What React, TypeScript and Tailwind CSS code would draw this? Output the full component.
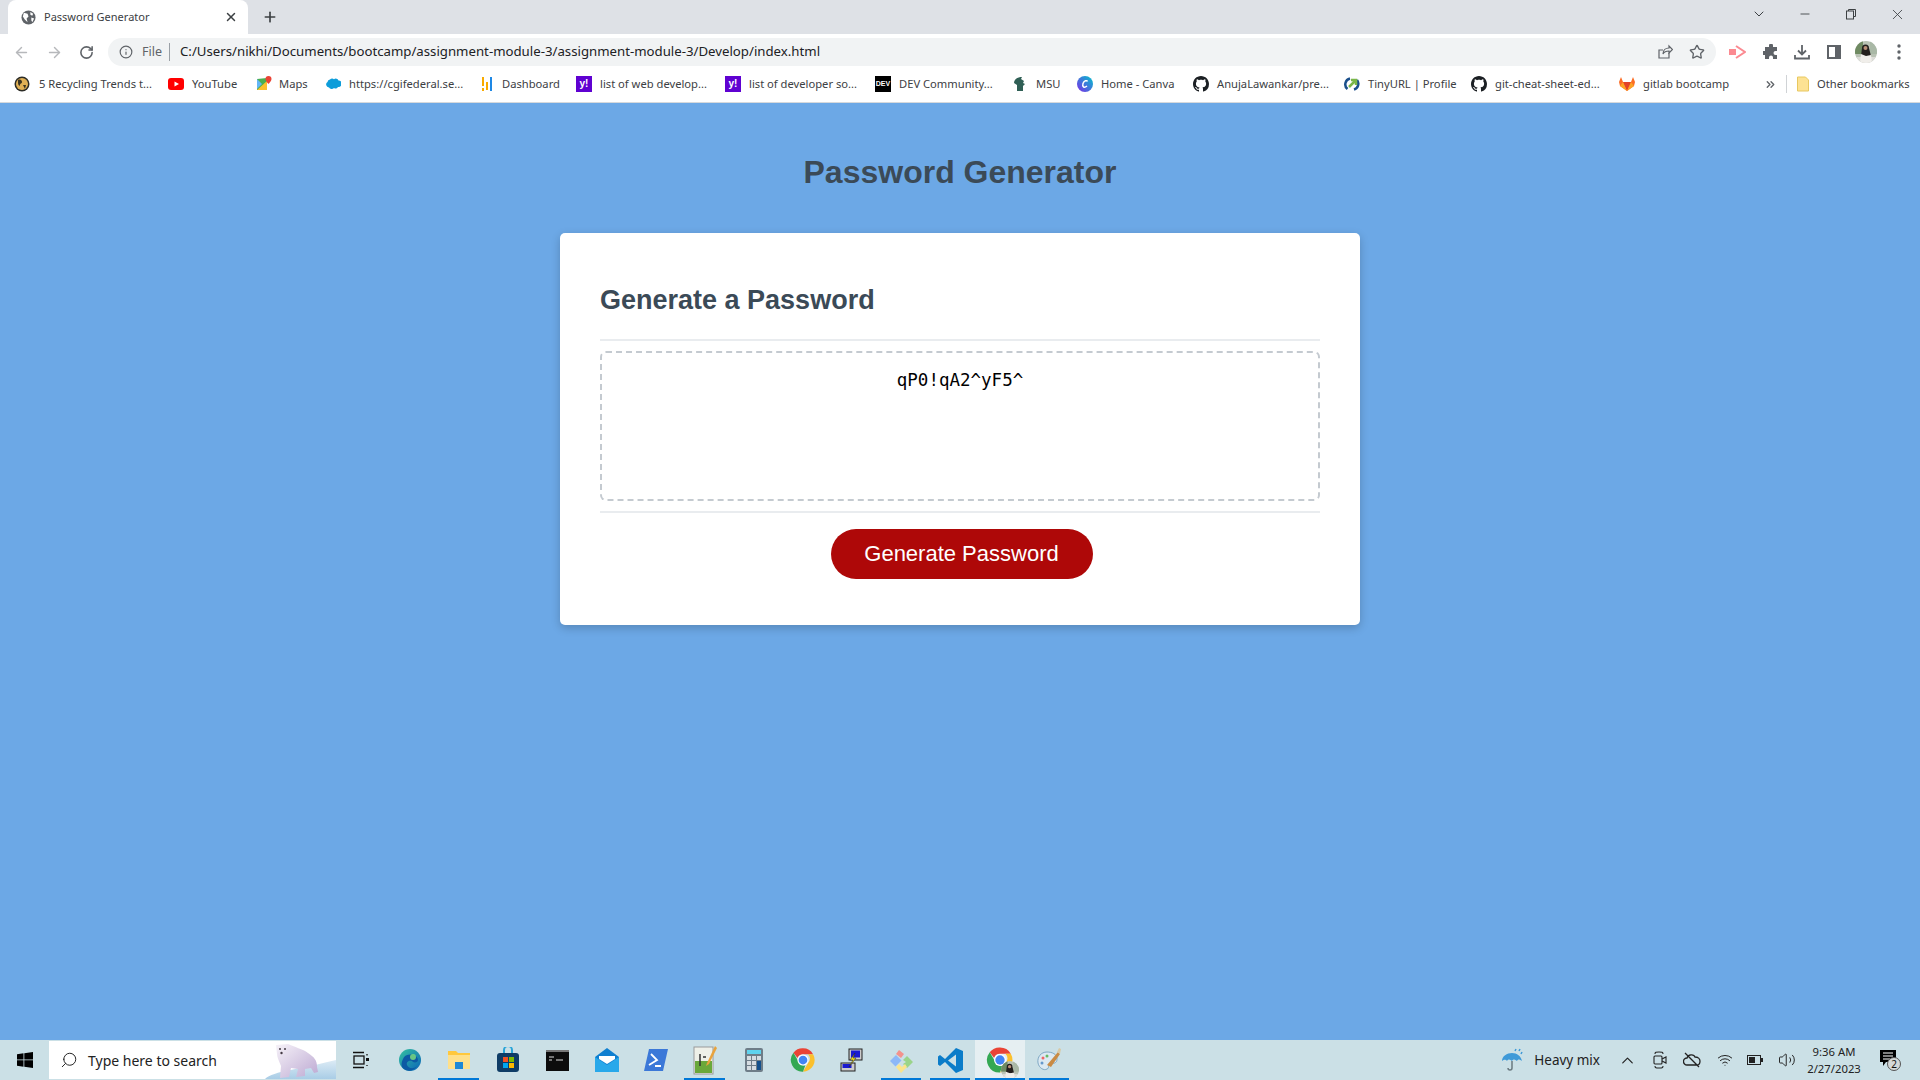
import React from "react";
import { ArrowLeft, ArrowRight, RotateCw, Info, Star, X, Plus, ChevronDown, Minus, ChevronUp, Search, ChevronsRight, Volume2, Wifi } from "lucide-react";

const Sans = "font-['Noto_Sans','Open_Sans',sans-serif]";

function Chrome({ size = 24 }: { size?: number }) {
  return (
    <svg width={size} height={size} viewBox="0 0 48 48">
      <path d="M24 4a20 20 0 0 1 17.3 10H24a10 10 0 0 0-9.4 6.6L7.6 11.5A20 20 0 0 1 24 4z" fill="#ea4335" />
      <path d="M41.3 14A20 20 0 0 1 24 44l8.7-15a10 10 0 0 0-.2-15z" fill="#fbc02d" />
      <path d="M24 44A20 20 0 0 1 7.6 11.5l8.6 15A10 10 0 0 0 28 33.2z" fill="#34a853" />
      <circle cx="24" cy="24" r="9.5" fill="#fff" />
      <circle cx="24" cy="24" r="7.5" fill="#4285f4" />
    </svg>
  );
}

function Github() {
  return (
    <svg width="16" height="16" viewBox="0 0 16 16" fill="#1b1f23">
      <path d="M8 0C3.58 0 0 3.58 0 8c0 3.54 2.29 6.53 5.47 7.59.4.07.55-.17.55-.38 0-.19-.01-.82-.01-1.49-2.01.37-2.53-.49-2.69-.94-.09-.23-.48-.94-.82-1.13-.28-.15-.68-.52-.01-.53.63-.01 1.08.58 1.23.82.72 1.21 1.87.87 2.33.66.07-.52.28-.87.51-1.07-1.78-.2-3.64-.89-3.64-3.95 0-.87.31-1.59.82-2.15-.08-.2-.36-1.02.08-2.12 0 0 .67-.21 2.2.82.64-.18 1.32-.27 2-.27s1.36.09 2 .27c1.53-1.04 2.2-.82 2.2-.82.44 1.1.16 1.92.08 2.12.51.56.82 1.27.82 2.15 0 3.07-1.87 3.75-3.65 3.95.29.25.54.73.54 1.48 0 1.07-.01 1.93-.01 2.2 0 .21.15.46.55.38A8 8 0 0 0 16 8c0-4.42-3.58-8-8-8z" />
    </svg>
  );
}

function Yahoo() {
  return (
    <div className="w-4 h-4 bg-[#5f01d1] flex items-center justify-center text-white text-[10px] font-bold leading-none font-['Liberation_Sans',sans-serif]">y!</div>
  );
}

function Avatar({ size = 22 }: { size?: number }) {
  return (
    <svg width={size} height={size} viewBox="0 0 22 22">
      <clipPath id={`av${size}`}><circle cx="11" cy="11" r="11" /></clipPath>
      <g clipPath={`url(#av${size})`}>
        <rect width="22" height="22" fill="#b9c2b4" />
        <rect width="8" height="13" fill="#6f8a62" />
        <rect x="15" width="7" height="13" fill="#a9b8a6" />
        <rect y="16" width="22" height="6" fill="#dcdcd8" />
        <path d="M7 7a3.500 3.500 0 0 1 7 0l2 8H6z" fill="#231f1d" />
        <circle cx="10.500" cy="7" r="2" fill="#b88e76" />
        <path d="M5 22l1-9 5 2 5-1 1 8z" fill="#f0eeea" />
      </g>
    </svg>
  );
}

const bookmarks: { w: string; gap: string; text: string; icon: React.ReactNode }[] = [
  { w: "w-[154px]", gap: "gap-[9px]", text: "5 Recycling Trends t...", icon: (
    <svg width="16" height="16" viewBox="0 0 16 16"><circle cx="8" cy="8" r="7.500" fill="#2b2b26" /><circle cx="8" cy="8" r="6" fill="#e0b055" /><path d="M4 4c2-1 4 0 4 2s-2 1-2 3-2 0-2-2zM9 9l3 0-1 4z" fill="#3a3320" /></svg>
  ) },
  { w: "w-[88px]", gap: "gap-[8px]", text: "YouTube", icon: (
    <svg width="16" height="16" viewBox="0 0 16 16"><rect y="2" width="16" height="12" rx="3" fill="#f00" /><path d="M6.500 5.500v5L11 8z" fill="#fff" /></svg>
  ) },
  { w: "w-[69px]", gap: "gap-[7px]", text: "Maps", icon: (
    <svg width="16" height="16" viewBox="0 0 16 16"><path d="M1 3l10-1v12H1z" fill="#4caf50" /><path d="M1 14L11 5v9z" fill="#fbc02d" /><path d="M1 3l5 5-5 5z" fill="#64b5f6" /><path d="M12.500 0a3 3 0 0 1 3 3c0 2-3 5-3 5s-3-3-3-5a3 3 0 0 1 3-3z" fill="#ea4335" /></svg>
  ) },
  { w: "w-[156px]", gap: "gap-[8px]", text: "https://cgifederal.se...", icon: (
    <svg width="16" height="16" viewBox="0 0 16 16"><path d="M5 3.500a3 3 0 0 1 4-.3 3 3 0 0 1 4.500 1.200A3.200 3.200 0 0 1 13 11a3 3 0 0 1-4 1 3 3 0 0 1-5-.5A3 3 0 0 1 2.500 6 3 3 0 0 1 5 3.500z" fill="#0d9dda" /></svg>
  ) },
  { w: "w-[95px]", gap: "gap-[5px]", text: "Dashboard", icon: (
    <svg width="16" height="16" viewBox="0 0 16 16"><rect x="1" y="1" width="2" height="9" fill="#f9ab00" /><rect x="1" y="12" width="2" height="3" fill="#f9ab00" /><rect x="5" y="6" width="2" height="8" fill="#f9ab00" /><rect x="9" y="1" width="2" height="14" fill="#1e88e5" /></svg>
  ) },
  { w: "w-[149px]", gap: "gap-[8px]", text: "list of web develop...", icon: <Yahoo /> },
  { w: "w-[150px]", gap: "gap-[8px]", text: "list of developer so...", icon: <Yahoo /> },
  { w: "w-[137px]", gap: "gap-[8px]", text: "DEV Community...", icon: (
    <div className="w-4 h-4 bg-black text-white text-[7px] font-bold flex items-center justify-center font-['Liberation_Sans',sans-serif]">DEV</div>
  ) },
  { w: "w-[65px]", gap: "gap-[8px]", text: "MSU", icon: (
    <svg width="16" height="16" viewBox="0 0 16 16"><path d="M5 15V9L2 7c0-4 4-6 8-6l-1 2 3 2-1 2 2 1-2 2v5z" fill="#2f5f55" /></svg>
  ) },
  { w: "w-[116px]", gap: "gap-[8px]", text: "Home - Canva", icon: (
    <svg width="16" height="16" viewBox="0 0 16 16"><defs><linearGradient id="cv" x1="0" y1="1" x2="1" y2="0"><stop offset="0" stopColor="#7d2ae8" /><stop offset="1" stopColor="#00c4cc" /></linearGradient></defs><circle cx="8" cy="8" r="8" fill="url(#cv)" /><path d="M10.500 5.500C10 4 7 4.500 6 7.500s1 5 4 2.500" fill="none" stroke="#fff" strokeWidth="1.500" /></svg>
  ) },
  { w: "w-[151px]", gap: "gap-[8px]", text: "AnujaLawankar/pre...", icon: <Github /> },
  { w: "w-[127px]", gap: "gap-[8px]", text: "TinyURL | Profile", icon: (
    <svg width="16" height="16" viewBox="0 0 16 16"><path d="M6 2.500A6 6 0 0 0 3.500 13" fill="none" stroke="#1a4f8b" strokeWidth="2.500" /><path d="M10 13.500A6 6 0 0 0 13 4" fill="none" stroke="#1a4f8b" strokeWidth="2.500" /><path d="M5 11l6-6M7 4h5v5" fill="none" stroke="#7ab648" strokeWidth="2.500" /></svg>
  ) },
  { w: "w-[148px]", gap: "gap-[8px]", text: "git-cheat-sheet-ed...", icon: <Github /> },
  { w: "w-[145px]", gap: "gap-[8px]", text: "gitlab bootcamp", icon: (
    <svg width="16" height="16" viewBox="0 0 16 16"><path d="M8 15L1 10 0 6l2-5 2 5h8l2-5 2 5-1 4z" fill="#fc6d26" /><path d="M8 15L4 6h8z" fill="#e24329" /><path d="M8 15L1 10l3-4zM8 15l7-5-3-4z" fill="#fca326" /></svg>
  ) },
];

function Bookmark({ w, gap, text, icon }: { w: string; gap: string; text: string; icon: React.ReactNode }) {
  return (
    <div className={`${w} ${gap} flex items-center shrink-0`}>
      <span className="w-4 h-4 flex items-center justify-center shrink-0">{icon}</span>
      <span className="text-[11.200px] text-[#3c4043] whitespace-nowrap leading-none">{text}</span>
    </div>
  );
}

function TabBar() {
  return (
    <div className="h-[34px] bg-[#dee1e6] flex items-end pl-2 shrink-0">
      <div className="w-[240px] h-[34px] bg-white rounded-t-lg flex items-center pl-[13px] pr-[10px]">
        <svg width="15" height="15" viewBox="0 0 16 16" className="shrink-0">
          <circle cx="8" cy="8" r="7.500" fill="#5f6368" />
          <path d="M3 3l4 1 1 3-2 2 1 4-3-3-2-3zM10 2l3 2-1 2-2-1zM11 8l3 1-2 4-1-2z" fill="#fff" />
        </svg>
        <span className="ml-[8px] text-[11px] text-[#3c4043] flex-1 whitespace-nowrap">Password Generator</span>
        <X size={14} strokeWidth={2.500} className="text-[#3c4043]" />
      </div>
      <div className="h-[34px] flex items-center ml-[14px]">
        <Plus size={16} strokeWidth={2.500} className="text-[#3c4043]" />
      </div>
      <div className="flex-1" />
      <div className="h-[28px] self-start flex items-center text-[#3c4043]">
        <span className="w-[46px] flex justify-center"><ChevronDown size={16} strokeWidth={1.500} /></span>
        <span className="w-[46px] flex justify-center"><Minus size={14} strokeWidth={1.500} /></span>
        <span className="w-[46px] flex justify-center">
          <svg width="12" height="12" viewBox="0 0 12 12" fill="none" stroke="currentColor"><rect x="1.500" y="3" width="7" height="8" /><path d="M3.500 3V1.500h7v7H8.500" /></svg>
        </span>
        <span className="w-[46px] flex justify-center"><X size={17} strokeWidth={1.200} /></span>
      </div>
    </div>
  );
}

function Toolbar() {
  return (
    <div className="h-[32px] bg-white flex items-end shrink-0">
      <div className="w-[108px] h-[28px] flex items-center pl-[13px] gap-[16px] shrink-0">
        <ArrowLeft size={17} className="text-[#b6b8bb]" strokeWidth={2} />
        <ArrowRight size={17} className="text-[#b6b8bb]" strokeWidth={2} />
        <RotateCw size={15} className="text-[#5f6368]" strokeWidth={2.500} />
      </div>
      <div className="w-[1608px] h-[28px] bg-[#f1f3f4] rounded-full flex items-center pl-[11px] pr-[11px] shrink-0">
        <Info size={14} className="text-[#5f6368]" />
        <span className="ml-[9px] text-[12.500px] text-[#5f6368]">File</span>
        <span className="ml-[7px] mr-[10px] w-px h-[18px] bg-[#9aa0a6]" />
        <span className="text-[13.230px] text-[#202124] whitespace-nowrap flex-1">C:/Users/nikhi/Documents/bootcamp/assignment-module-3/assignment-module-3/Develop/index.html</span>
        <svg width="16" height="16" viewBox="0 0 16 16" fill="none" stroke="#5f6368" strokeWidth="1.200"><path d="M12 9v5H2V6h4" /><path d="M6 10c0-4 3-6 6-6V2l3.500 3.500L12 9V7c-3 0-5 1-6 3z" /></svg>
        <Star size={16} className="text-[#5f6368] ml-[16px]" strokeWidth={2} />
      </div>
      <div className="flex-1 h-[28px] flex items-center pl-[13px] text-[#5f6368]">
        <svg width="17" height="14" viewBox="0 0 17 14" className="shrink-0"><rect y="4" width="7" height="6" fill="#fb8a91" /><path d="M7 1l9 6-9 6" fill="none" stroke="#fb8a91" strokeWidth="2" /></svg>
        <svg width="16" height="16" viewBox="0 0 16 16" fill="#5f6368" className="ml-[17px] shrink-0"><path d="M6 1.500a2 2 0 0 1 4 0V3h4v4h-1.500a2 2 0 0 0 0 4H14v4h-4v-1.500a2 2 0 0 0-4 0V15H2v-4H.5a2 2 0 0 1 0-4H2V3h4z" /></svg>
        <svg width="16" height="16" viewBox="0 0 16 16" fill="none" stroke="#5f6368" strokeWidth="1.800" className="ml-[15px] shrink-0"><path d="M8 1v9M4 6.500L8 10.500l4-4M1 11v3.500h14V11" /></svg>
        <svg width="14" height="14" viewBox="0 0 14 14" className="ml-[17px] shrink-0"><path d="M0 0h14v14H0zM2 2v10h6V2z" fill="#5f6368" fillRule="evenodd" /></svg>
        <span className="ml-[14px] shrink-0"><Avatar /></span>
        <svg width="4" height="16" viewBox="0 0 4 16" fill="#5f6368" className="ml-[20px] shrink-0"><circle cx="2" cy="2" r="1.700" /><circle cx="2" cy="8" r="1.700" /><circle cx="2" cy="14" r="1.700" /></svg>
      </div>
    </div>
  );
}

function BookmarksBar() {
  return (
    <div className="h-[37px] bg-white border-b border-[#d6d9dc] flex items-center pl-[14px] shrink-0">
      {bookmarks.map((b) => (
        <Bookmark key={b.text + b.w} {...b} />
      ))}
      <ChevronsRight size={13} className="text-[#5f6368] shrink-0" strokeWidth={2.500} />
      <span className="w-px h-[18px] bg-[#d0d3d6] ml-[9px] shrink-0" />
      <svg width="12" height="16" viewBox="0 0 12 16" className="ml-[10px] shrink-0"><path d="M0.500 1h8l3 3v11h-11z" fill="#fde293" stroke="#e8c860" /></svg>
      <span className="ml-[8px] text-[11.200px] text-[#3c4043] whitespace-nowrap">Other bookmarks</span>
    </div>
  );
}

function Slot({ active, bar, children }: { active?: boolean; bar?: boolean; children: React.ReactNode }) {
  return (
    <div className={`relative w-[49.200px] h-full shrink-0 flex items-center justify-center ${active ? "bg-[#e6eff2]" : ""}`}>
      {children}
      {bar && <span className={`absolute bottom-0 h-[2px] bg-[#0078d7] ${active ? "left-0 right-0" : "left-[4px] right-[5px]"}`} />}
    </div>
  );
}

function Taskbar() {
  return (
    <div className="h-[40px] bg-[#cbe0e6] flex items-center shrink-0">
      <div className="w-[49px] h-full flex items-center justify-center shrink-0">
        <svg width="16" height="16" viewBox="0 0 16 16" fill="#000"><path d="M0 2.200L6.500 1.300V7.500H0zM7.300 1.200L16 0V7.500H7.300zM0 8.300H6.500V14.700L0 13.800zM7.300 8.300H16V16L7.300 14.800z" /></svg>
      </div>
      <div className="relative w-[287px] h-[38px] bg-white flex items-center pl-[11px] shrink-0 overflow-hidden">
        <Search size={18} strokeWidth={1.300} className="text-[#222] -scale-x-100" />
        <span className="ml-[10px] text-[14px] text-[#222]">Type here to search</span>
        <svg width="75" height="38" viewBox="0 0 75 38" className="absolute right-0 top-0">
          <defs>
            <linearGradient id="bear" x1="0" y1="0" x2="1" y2="1"><stop offset="0" stopColor="#f6f2f8" /><stop offset="1" stopColor="#bca8d2" /></linearGradient>
            <linearGradient id="ice" x1="0" y1="0" x2="0" y2="1"><stop offset="0" stopColor="#dcebf5" /><stop offset="1" stopColor="#a9cde6" /></linearGradient>
          </defs>
          <path d="M4 38C12 30 40 28 75 19V38z" fill="url(#ice)" />
          <path d="M15 4L27 3C33 6 42 8 47 12C53 16 56 19 56 26L57 31L53 32L50 27L44 28L44 35L35 36L37 28L30 27L28 36L19 37L20 25C18 20 16 16 16 13Z" fill="url(#bear)" />
          <circle cx="19" cy="8" r="1" fill="#443a44" />
          <circle cx="24" cy="8" r="1" fill="#443a44" />
          <circle cx="20.500" cy="12" r="1.200" fill="#443a44" />
        </svg>
      </div>
      <Slot>
        <svg width="18" height="18" viewBox="0 0 18 18" fill="none" stroke="#111" strokeWidth="1.300"><path d="M1 1.500h11M1 16.500h11" /><rect x="2" y="5" width="10" height="8" /><path d="M15 3v1.500M15 14v1" /><rect x="14" y="7" width="3" height="3" fill="#111" stroke="none" /></svg>
      </Slot>
      <Slot>
        <svg width="24" height="24" viewBox="0 0 24 24"><defs><linearGradient id="ed" x1="0" y1="0" x2="1" y2="1"><stop offset="0" stopColor="#35c1a0" /><stop offset="1" stopColor="#0a64b8" /></linearGradient></defs><circle cx="12" cy="12" r="11" fill="url(#ed)" /><path d="M5 11c2-6 14-6 15 1 0 3-5 3-6 1-3-1-6 1-5 4s6 5 10 1c-3 5-9 6-13 3-3-2-3-6-1-10z" fill="#0c59a4" /><circle cx="15" cy="9" r="3" fill="#7fe07a" opacity=".8" /></svg>
      </Slot>
      <Slot bar>
        <svg width="22" height="20" viewBox="0 0 22 20"><path d="M0 1h8l2 2h12v16H0z" fill="#ffc83d" /><path d="M0 5h22v14H0z" fill="#ffe08a" /><rect x="7" y="12" width="8" height="7" fill="#1e88d6" /></svg>
      </Slot>
      <Slot>
        <svg width="24" height="26" viewBox="0 0 24 26"><path d="M8 6V3a4 4 0 0 1 8 0v3" fill="none" stroke="#2aa5d8" strokeWidth="2" /><rect x="1" y="6" width="22" height="19" rx="3" fill="#0f3c66" /><rect x="7" y="10" width="5" height="5" fill="#f25022" /><rect x="13" y="10" width="5" height="5" fill="#7fba00" /><rect x="7" y="16" width="5" height="5" fill="#00a4ef" /><rect x="13" y="16" width="5" height="5" fill="#ffb900" /></svg>
      </Slot>
      <Slot>
        <svg width="23" height="21" viewBox="0 0 23 21"><rect width="23" height="21" fill="#0c0c0c" /><rect width="23" height="2" fill="#777" /><path d="M3 7h5M3 10h3M10 10h7" stroke="#ddd" strokeWidth="1.200" /></svg>
      </Slot>
      <Slot>
        <svg width="24" height="24" viewBox="0 0 24 24"><path d="M0 9L12 0l12 9v15H0z" fill="#0f7fd0" /><path d="M0 9l12 8 12-8v15H0z" fill="#28a8ea" /><path d="M4 8h16v3l-8 5-8-5z" fill="#fff" /></svg>
      </Slot>
      <Slot>
        <svg width="24" height="22" viewBox="0 0 24 22"><path d="M5 0h19l-5 22H0z" fill="#3b78d8" /><path d="M7 5l6 6-8 5M11 17h6" fill="none" stroke="#fff" strokeWidth="1.800" /></svg>
      </Slot>
      <Slot bar>
        <svg width="24" height="30" viewBox="0 0 24 30"><rect x="1" y="2" width="19" height="27" fill="#eef0e8" stroke="#999" /><rect x="2" y="16" width="17" height="12" fill="#6aa83a" /><path d="M7 9v12M10 12h3" stroke="#333" strokeWidth="1.500" /><path d="M22 1L14 18l-1 3 3-2 8-16z" fill="#e8a33d" /></svg>
      </Slot>
      <Slot>
        <svg width="18" height="24" viewBox="0 0 18 24"><rect width="18" height="24" rx="2" fill="#6e7d88" /><rect x="2" y="2" width="14" height="4" fill="#5fd3ee" /><g fill="#d6dde2"><rect x="2" y="8" width="4" height="4" /><rect x="7" y="8" width="4" height="4" /><rect x="12" y="8" width="4" height="4" /><rect x="2" y="13" width="4" height="4" /><rect x="7" y="13" width="4" height="4" /><rect x="2" y="18" width="4" height="4" /><rect x="7" y="18" width="4" height="4" /></g><rect x="12" y="13" width="4" height="9" fill="#14508c" /></svg>
      </Slot>
      <Slot><Chrome size={28} /></Slot>
      <Slot>
        <svg width="24" height="24" viewBox="0 0 24 24"><rect x="1" y="15" width="14" height="8" fill="#ccc" stroke="#222" /><rect x="2.500" y="16" width="9" height="4" fill="#1a1ad0" /><rect x="9" y="1" width="13" height="11" fill="#ccc" stroke="#222" /><rect x="11" y="2.500" width="9" height="7" fill="#1a1ad0" /><path d="M15 5l-5 7 3 0-4 7 7-9h-3z" fill="#f7e017" stroke="#222" strokeWidth=".5" /></svg>
      </Slot>
      <Slot bar>
        <svg width="25" height="25" viewBox="0 0 25 25">
          <path d="M7 6l3-4 5 4-3 4z" fill="#f3928c" />
          <path d="M1 13l6-6 5.500 5.500-6 6z" fill="#8db8f8" />
          <path d="M14 12l4-4 6 6-6 6-4-4 3-2z" fill="#9ad48a" />
          <path d="M7 19l3-3 3 3 3-3 2 3-6 6z" fill="#fbe48c" />
        </svg>
      </Slot>
      <Slot bar>
        <svg width="25" height="25" viewBox="0 0 25 25"><path d="M18 0L7 11 2 7 0 8.500v8L2 18l5-4 11 11 7-3V3z" fill="#0a7cc9" /><path d="M18 6.500L10 12.500l8 6z" fill="#cbe0e6" /></svg>
      </Slot>
      <Slot active bar>
        <span className="relative flex">
          <Chrome size={30} />
          <span className="absolute -right-[4px] -bottom-[4px] flex"><Avatar size={18} /></span>
        </span>
      </Slot>
      <Slot bar>
        <svg width="25" height="26" viewBox="0 0 25 26"><path d="M10 5c-6 0-10 5-9 11 1 5 6 8 9 6 3-1 0-4 3-5s7 0 7-5-5-7-10-7z" fill="#dce9f2" stroke="#7fa8c4" /><circle cx="6" cy="11" r="1.500" fill="#e66" /><circle cx="10" cy="9" r="1.500" fill="#6b6" /><circle cx="5" cy="16" r="1.500" fill="#69c" /><path d="M10 18L21 5l2 2-9 13z" fill="#c98b45" /><path d="M20 5l2-4 2 1-1 5z" fill="#d9c9a5" /></svg>
      </Slot>
      <div className="flex-1" />
      <svg width="24" height="24" viewBox="0 0 24 24" className="shrink-0"><path d="M1 13c0-5 5-8 10-8s9 3 10 8c-3-2-4-2-5 0-2-2-4-2-5 0-2-2-4-2-5 0-2-2-3-1-5 0z" fill="#3f9ad8" /><path d="M11 13v7a2 2 0 0 1-4 0" fill="none" stroke="#6b7a80" strokeWidth="1.500" /><path d="M15 1l-1 2M19 1l-1 2M21 4l-1 2" stroke="#3f9ad8" strokeWidth="1.500" /></svg>
      <span className="ml-[9px] text-[13.500px] text-[#222] whitespace-nowrap">Heavy mix</span>
      <ChevronUp size={19} strokeWidth={1.500} className="ml-[18px] text-[#222] shrink-0" />
      <svg width="14" height="18" viewBox="0 0 14 18" fill="none" stroke="#222" strokeWidth="1.100" className="ml-[16px] shrink-0"><path d="M2 3c0-2 1-2 4-2s4 0 4 2M2 15c0 2 1 2 4 2s4 0 4-2" /><rect x="1" y="5" width="8" height="8" rx="1" /><path d="M9 8l4-2v6l-4-2" /></svg>
      <svg width="18" height="16" viewBox="0 0 18 16" fill="none" stroke="#222" strokeWidth="1.300" className="ml-[16px] shrink-0"><path d="M4 13a3.500 3.500 0 0 1 0-7c1-4 7-4 8-1 3 0 5 2 5 4s-1 4-3 4zM2 1l14 14" /></svg>
      <Wifi size={16} strokeWidth={1.500} className="ml-[16px] text-[#222] shrink-0" />
      <svg width="16" height="10" viewBox="0 0 16 10" className="ml-[14px] shrink-0"><rect x=".5" y=".5" width="13" height="9" fill="none" stroke="#222" /><rect x="2" y="2" width="6" height="6" fill="#222" /><rect x="14" y="3" width="2" height="4" fill="#222" /></svg>
      <Volume2 size={18} strokeWidth={1.300} className="ml-[15px] text-[#222] shrink-0" />
      <div className="ml-[7px] w-[62px] flex flex-col items-center text-[11.300px] leading-[17px] text-[#222] shrink-0">
        <span>9:36 AM</span>
        <span>2/27/2023</span>
      </div>
      <div className="relative ml-[15px] mr-[22px] w-[18px] h-[24px] shrink-0">
        <svg width="16" height="16" viewBox="0 0 16 16" className="absolute left-0 top-[2px]"><path d="M0 0h16v12H6l-3 4v-4H0z" fill="#000" /><path d="M3 3h10M3 6h10M3 9h7" stroke="#fff" /></svg>
        <span className="absolute left-[7px] top-[9px] w-[14px] h-[14px] rounded-full bg-[#d4d8d8] border border-[#555] flex items-center justify-center text-[10px] leading-none text-[#111]">2</span>
      </div>
    </div>
  );
}

function PasswordCard() {
  return (
    <main className="flex-1 bg-[#6ca8e6] flex flex-col items-center min-h-0 font-['Liberation_Sans',Arial,sans-serif]">
      <h1 className="mt-[50px] h-[38px] leading-[38px] text-[32px] font-bold text-[#3b4a57] text-center">Password Generator</h1>
      <section className="mt-[42px] w-[800px] h-[392px] bg-white rounded-[5px] shadow-[0_3px_10px_rgba(0,0,0,0.2)] px-[40px] flex flex-col">
        <h2 className="h-[108px] pt-[50px] border-b-2 border-[#e9ecef] text-[27px] leading-[34px] font-bold text-[#3b4a57]">Generate a Password</h2>
        <div className="mt-[10px] h-[150px] border-2 border-dashed border-[#c4cad0] rounded-[6px] pt-[15px] text-center text-[17.500px] leading-[24px] text-black font-['DejaVu_Sans_Mono',monospace]">qP0!qA2^yF5^</div>
        <div className="mt-[10px] border-b-2 border-[#e9ecef]" />
        <div className="mt-[16px] flex justify-center">
          <button className="ml-[3px] w-[262px] h-[50px] pb-[2px] rounded-full bg-[#ae0808] text-white text-[22px] font-normal">Generate Password</button>
        </div>
      </section>
    </main>
  );
}

export default function App() {
  return (
    <div className={`w-full h-screen flex flex-col overflow-hidden ${Sans}`}>
      <TabBar />
      <Toolbar />
      <BookmarksBar />
      <PasswordCard />
      <Taskbar />
    </div>
  );
}
